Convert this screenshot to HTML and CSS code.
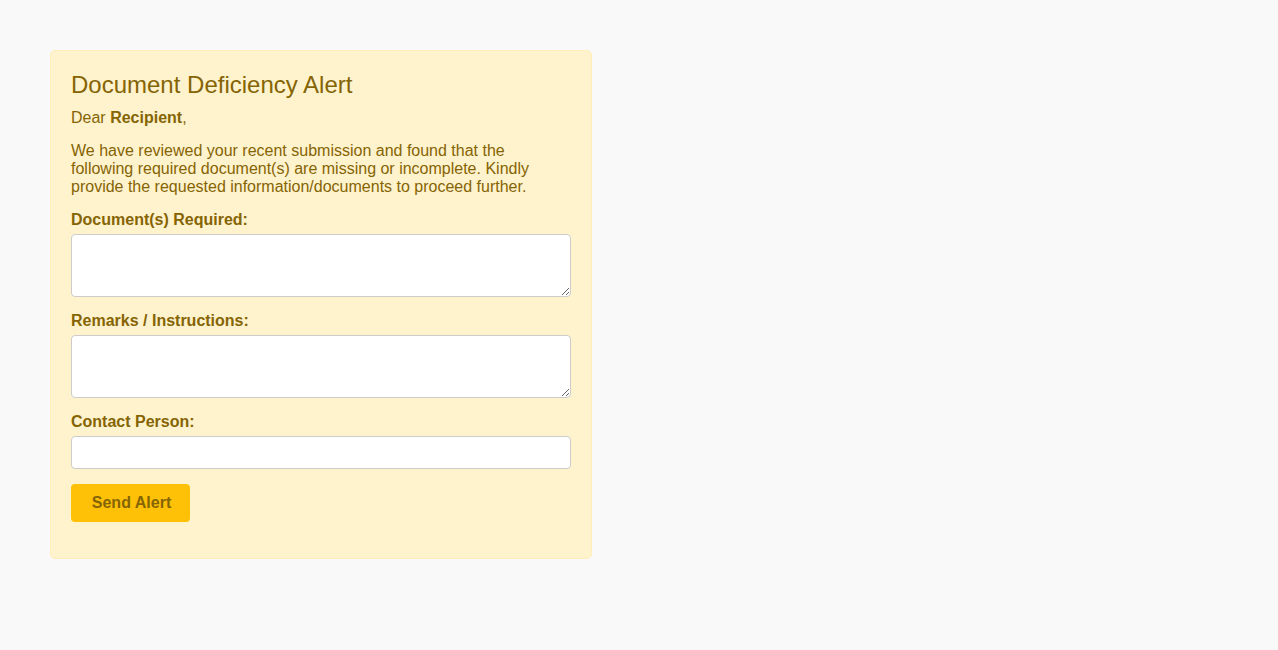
FILE: index.html
```html
<!DOCTYPE html>
<html lang="en">
<head>
<meta charset="utf-8">
<title>Document Deficiency Alert</title>
<link rel="stylesheet" href="styles.css">
</head>
<body>
  <div class="alert-card">
    <h2 class="alert-title">Document Deficiency Alert</h2>
    <p class="greeting">Dear <strong>Recipient</strong>,</p>
    <p class="intro">We have reviewed your recent submission and found that the following required document(s) are missing or incomplete. Kindly provide the requested information/documents to proceed further.</p>
    <form class="alert-form">
      <label class="field-label" for="docs">Document(s) Required:</label>
      <textarea class="field-area" id="docs"></textarea>
      <label class="field-label" for="remarks">Remarks / Instructions:</label>
      <textarea class="field-area" id="remarks"></textarea>
      <label class="field-label" for="contact">Contact Person:</label>
      <input class="field-input" id="contact" type="text">
      <button class="send-btn" type="button">Send Alert</button>
    </form>
  </div>
</body>
</html>
```
FILE: styles.css
```css
html, body {
  margin: 0;
  padding: 0;
}
body {
  background: #f9f9f9;
  font-family: "Liberation Sans", Arial, sans-serif;
  color: #856404;
  padding: 50px;
}
.alert-card {
  width: 500px;
  padding: 20px;
  background: #fff3cd;
  border: 1px solid #ffeeba;
  border-radius: 5px;
}
.alert-title {
  margin: 0 0 10px;
  font-size: 24px;
  font-weight: normal;
}
.greeting {
  margin: 0 0 15px;
  font-size: 16px;
}
.intro {
  margin: 0 0 15px;
  font-size: 16px;
}
.alert-form {
  display: flex;
  flex-direction: column;
  align-items: flex-start;
  margin-bottom: 16px;
}
.field-label {
  display: block;
  font-weight: bold;
  font-size: 16px;
  margin-bottom: 5px;
}
.field-area, .field-input {
  box-sizing: border-box;
  width: 500px;
  border: 1px solid #ccc;
  border-radius: 4px;
  background: #fff;
  font-family: "Liberation Sans", Arial, sans-serif;
  font-size: 14px;
  padding: 8px;
  margin: 0 0 15px;
}
.field-area {
  height: 63px;
}
.field-input {
  height: 33px;
}
.send-btn {
  height: 38px;
  width: 119px;
  padding: 0 0 1px 2px;
  border: none;
  border-radius: 4px;
  background: #ffc107;
  color: #856404;
  font-family: "Liberation Sans", Arial, sans-serif;
  font-size: 16px;
  font-weight: bold;
  cursor: pointer;
}
```
